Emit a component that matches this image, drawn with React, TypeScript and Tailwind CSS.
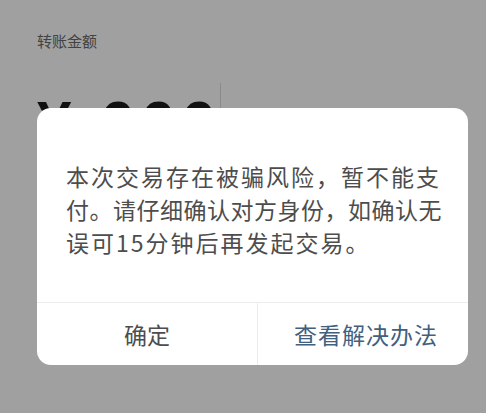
import React from 'react';

const cjk = { fontFamily: '"Noto Sans CJK SC", "Noto Sans", sans-serif' };

export default function App() {
  return (
    <div className="relative h-[413px] w-[486px] overflow-hidden bg-[#a0a0a0]" style={cjk}>
      {/* dimmed page underneath */}
      <div className="px-[37px] pt-[30px]">
        <p className="text-[15px] leading-[22px] text-[#424242]">转账金额</p>
        <div className="mt-[40px] flex items-start">
          <span
            className="text-[62px] font-bold leading-[62px] tracking-[6px] text-[#111]"
            style={{ fontFamily: '"Liberation Sans", Arial, sans-serif' }}
          >
            ¥ 000
          </span>
          <span className="ml-[-2px] mt-[-9px] h-[28px] w-px bg-[#8a8a8a]" />
        </div>
      </div>

      {/* risk dialog */}
      <div className="absolute left-[37px] top-[108px] w-[431px] overflow-hidden rounded-[14px] bg-white">
        <div className="pl-[29px] pr-[10px] pt-[52px] pb-[43px] text-[23px] leading-[33px] tracking-[2px] whitespace-nowrap text-[#4d4d4d]">
          <p>本次交易存在被骗风险，暂不能支</p>
          <p className="tracking-[0.5px]">付。请仔细确认对方身份，如确认无</p>
          <p>误可15分钟后再发起交易。</p>
        </div>
        <div className="flex h-[63px] border-t border-[#ececec]">
          <button className="flex w-[220px] items-center justify-center text-[23px] text-[#4d4d4d]">
            确定
          </button>
          <button className="flex flex-1 items-center justify-center border-l border-[#ececec] pl-[6px] text-[23px] tracking-[1px] text-[#41607f]">
            查看解决办法
          </button>
        </div>
      </div>
    </div>
  );
}
